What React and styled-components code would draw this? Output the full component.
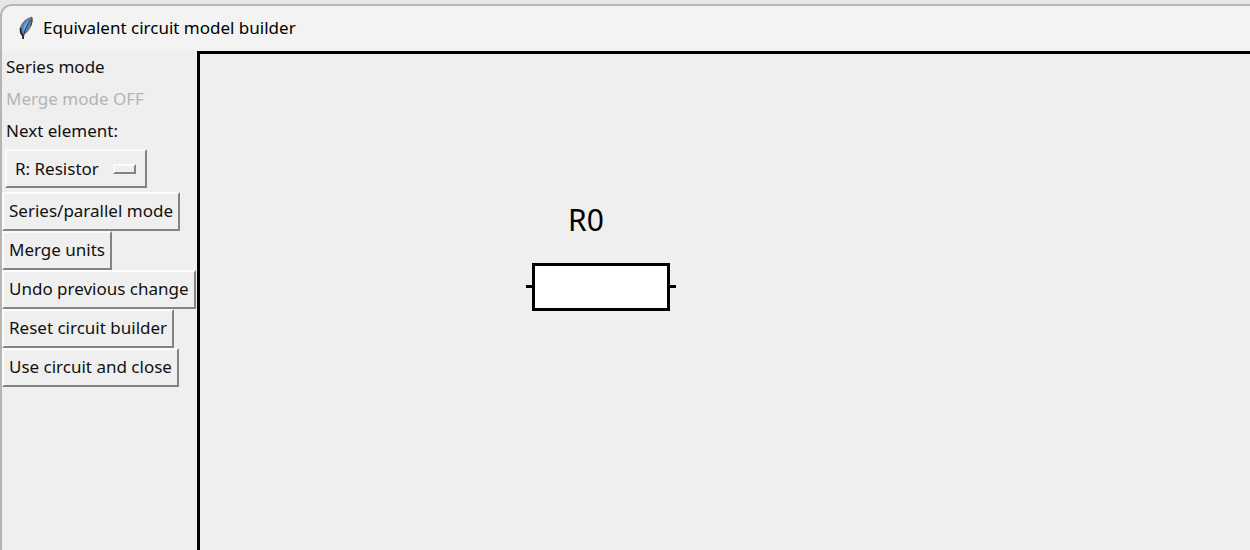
import React, { useState } from "react";
import styled, { createGlobalStyle } from "styled-components";

const GlobalStyle = createGlobalStyle`
  * { box-sizing: border-box; }
  body {
    margin: 0;
    background: #e6e6e6;
    color: #000;
    font-family: "Noto Sans", "Open Sans", sans-serif;
  }
`;

const Desktop = styled.div`
  min-height: 100vh;
  padding-top: 4px;
  overflow: hidden;
  display: flex;
`;

const Window = styled.main`
  flex: 1;
  min-width: 0;
  display: flex;
  flex-direction: column;
  background: #efefef;
  border: solid #b5b5b5;
  border-width: 2px 0 0 2px;
  border-top-left-radius: 12px;
  overflow: hidden;
`;

const TitleBar = styled.header`
  height: 45px;
  flex: none;
  display: flex;
  align-items: center;
  gap: 8px;
  padding: 0 0 2px 15px;
  background: #f3f3f3;
`;

const Title = styled.h1`
  margin: 0;
  font-size: 17px;
  line-height: 24px;
  font-weight: 400;
  white-space: nowrap;
`;

const Body = styled.div`
  flex: 1;
  display: flex;
`;

const Sidebar = styled.aside`
  width: 195px;
  flex: none;
  display: flex;
  flex-direction: column;
  align-items: flex-start;
  color: #111;
  font-size: 17px;
`;

const Status = styled.p`
  margin: 0;
  padding: 4px;
  line-height: 24px;
  white-space: nowrap;
  color: ${(p) => (p.$off ? "#b4b4b4" : "inherit")};
`;

const FieldLabel = styled(Status).attrs({ as: "label" })``;

const raised = `
  background: #efefef;
  border: 2px solid;
  border-color: #fbfbfb #838383 #838383 #fbfbfb;
  border-radius: 0;
  color: inherit;
  font: inherit;
  height: 39px;
`;

const Menu = styled.div`
  display: grid;
  align-items: center;
  margin: 2px 0 4px 3px;
`;

const Select = styled.select`
  ${raised}
  appearance: none;
  grid-area: 1 / 1;
  width: 142px;
  padding: 0 32px 0 8px;
`;

const Indicator = styled.span`
  grid-area: 1 / 1;
  justify-self: end;
  width: 23px;
  height: 10px;
  margin-right: 11px;
  border: 2px solid;
  border-color: #fbfbfb #838383 #838383 #fbfbfb;
  pointer-events: none;
`;

const Button = styled.button`
  ${raised}
  padding: 0 5px 2px;
  line-height: 24px;
  white-space: nowrap;
`;

const Canvas = styled.section`
  flex: 1;
  min-width: 0;
  border: solid #000;
  border-width: 3px 0 0 3px;
`;

const Circuit = styled.svg`
  display: block;
  width: 100%;
  height: 100%;
  font-size: 30px;
`;

function Feather() {
  return (
    <svg width="18" height="26" viewBox="0 0 18 26" aria-hidden="true">
      <path d="M14.5 2.5C9.500 3.500 5 8 3.500 13L3.500 17L5.500 20L9.500 17C13.500 13 15.500 7 14.500 2.500Z" fill="#4f88c6" stroke="#77746e" strokeWidth="1.5" />
      <path d="M12.500 4L7.500 10L6 16L9.500 12Z" fill="#76aee8" />
      <path d="M13.500 5Q8 12 6 24" fill="none" stroke="#24364c" strokeWidth="1" />
      <path d="M3.500 13L4 18L6 21V24" fill="none" stroke="#171717" strokeWidth="1.500" />
      <path d="M15 3V7L13.500 11" fill="none" stroke="#37342f" strokeWidth="1" />
    </svg>
  );
}

function Resistor({ x, y, name }) {
  return (
    <g transform={`translate(${x} ${y})`}>
      <text x="60" y="-32" textAnchor="middle">{name}</text>
      <path d="M0 23.5H150" stroke="#000" strokeWidth="3" />
      <rect x="7.5" y="1.5" width="135" height="45" fill="#fff" stroke="#000" strokeWidth="3" />
    </g>
  );
}

const actions = [
  "Series/parallel mode",
  "Merge units",
  "Undo previous change",
  "Reset circuit builder",
  "Use circuit and close",
];

export default function App() {
  const [element, setElement] = useState("R");
  return (
    <Desktop>
      <GlobalStyle />
      <Window>
        <TitleBar>
          <Feather />
          <Title>Equivalent circuit model builder</Title>
        </TitleBar>
        <Body>
          <Sidebar>
            <Status>Series mode</Status>
            <Status $off>Merge mode OFF</Status>
            <FieldLabel htmlFor="element">Next element:</FieldLabel>
            <Menu>
              <Select id="element" value={element} onChange={(e) => setElement(e.target.value)}>
                <option value="R">R: Resistor</option>
              </Select>
              <Indicator />
            </Menu>
            {actions.map((label) => (
              <Button type="button" key={label}>{label}</Button>
            ))}
          </Sidebar>
          <Canvas>
            <Circuit role="img" aria-label="Circuit with resistor R0">
              <Resistor x={326} y={209} name="R0" />
            </Circuit>
          </Canvas>
        </Body>
      </Window>
    </Desktop>
  );
}
